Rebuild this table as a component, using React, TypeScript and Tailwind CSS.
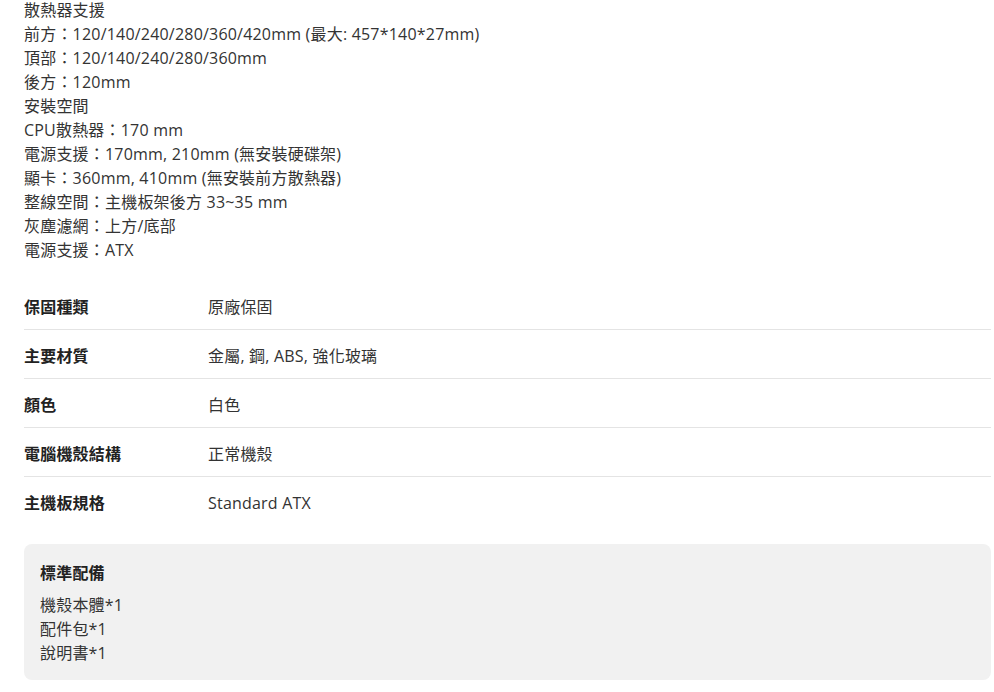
const specLines = [
  "散熱器支援",
  "前方：120/140/240/280/360/420mm (最大: 457*140*27mm)",
  "頂部：120/140/240/280/360mm",
  "後方：120mm",
  "安裝空間",
  "CPU散熱器：170 mm",
  "電源支援：170mm, 210mm (無安裝硬碟架)",
  "顯卡：360mm, 410mm (無安裝前方散熱器)",
  "整線空間：主機板架後方 33~35 mm",
  "灰塵濾網：上方/底部",
  "電源支援：ATX",
];

const rows = [
  { label: "保固種類", value: "原廠保固" },
  { label: "主要材質", value: "金屬, 鋼, ABS, 強化玻璃" },
  { label: "顏色", value: "白色" },
  { label: "電腦機殼結構", value: "正常機殼" },
  { label: "主機板規格", value: "Standard ATX" },
];

const included = ["機殼本體*1", "配件包*1", "說明書*1"];

export default function App() {
  return (
    <div
      className="min-h-[692px] bg-white pl-6 pr-[3px] text-[16px] leading-6 tracking-[0.2px] text-[#333]"
      style={{ fontFamily: '"Open Sans", "Noto Sans CJK TC", sans-serif' }}
    >
      <div className="-mt-[2px]">
        {specLines.map((line, i) => (
          <div key={i}>{line}</div>
        ))}
      </div>

      <div className="mt-[19px]">
        {rows.map((row, i) => (
          <div
            key={row.label}
            className={
              "flex pt-[14px] pb-[10px] " +
              (i < rows.length - 1 ? "border-b border-[#e4e4e4]" : "")
            }
          >
            <div className="w-[184px] shrink-0 font-bold text-[#222]">{row.label}</div>
            <div>{row.value}</div>
          </div>
        ))}
      </div>

      <div className="mt-[19px] rounded-lg bg-[#f1f1f1] px-4 pt-[17px] pb-[15px]">
        <div className="mb-2 font-bold text-[#222]">標準配備</div>
        {included.map((item) => (
          <div key={item}>{item}</div>
        ))}
      </div>
    </div>
  );
}
